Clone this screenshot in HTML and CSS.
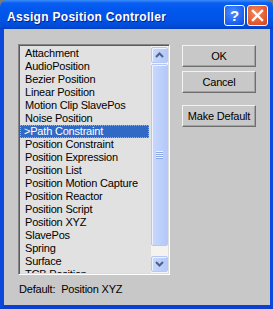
FILE: index.html
```html
<!DOCTYPE html>
<html>
<head>
    <title>Assign Position Controller</title>
    <link rel="stylesheet" href="styles.css">
</head>
<body>

<div class="window">
    <div class="titlebar">
        <div class="title">Assign Position Controller</div>
        <div class="caption-btn help">?</div>
        <div class="caption-btn close">
            <svg width="13" height="13" viewBox="0 0 13 13">
                <path d="M2 2 L11 11 M11 2 L2 11" stroke="#fff" stroke-width="2.4" stroke-linecap="square"/>
            </svg>
        </div>
    </div>

    <div class="client">
        <div class="left-col">
            <div class="listbox">
                <div class="items">
                    <div class="item">Attachment</div>
                    <div class="item">AudioPosition</div>
                    <div class="item">Bezier Position</div>
                    <div class="item">Linear Position</div>
                    <div class="item">Motion Clip SlavePos</div>
                    <div class="item">Noise Position</div>
                    <div class="item selected">&gt;Path Constraint</div>
                    <div class="item">Position Constraint</div>
                    <div class="item">Position Expression</div>
                    <div class="item">Position List</div>
                    <div class="item">Position Motion Capture</div>
                    <div class="item">Position Reactor</div>
                    <div class="item">Position Script</div>
                    <div class="item">Position XYZ</div>
                    <div class="item">SlavePos</div>
                    <div class="item">Spring</div>
                    <div class="item">Surface</div>
                    <div class="item">TCB Position</div>
                </div>
                <div class="scrollbar">
                    <div class="sb-btn">
                        <svg width="9" height="6" viewBox="0 0 9 6"><path d="M1 5 L4.5 1.5 L8 5" fill="none" stroke="#4d6185" stroke-width="2"/></svg>
                    </div>
                    <div class="sb-thumb">
                        <div class="grip"></div>
                    </div>
                    <div class="sb-track"></div>
                    <div class="sb-btn">
                        <svg width="9" height="6" viewBox="0 0 9 6"><path d="M1 1 L4.5 4.5 L8 1" fill="none" stroke="#4d6185" stroke-width="2"/></svg>
                    </div>
                </div>
            </div>
            <div class="default-line">
                <span class="default-label">Default:</span>
                <span>Position XYZ</span>
            </div>
        </div>

        <div class="buttons">
            <div class="btn">OK</div>
            <div class="btn">Cancel</div>
            <div class="btn spaced">Make Default</div>
        </div>
    </div>
</div>

</body>
</html>
```

FILE: styles.css
```css
body {
    margin: 0;
    background-color: #7a7a7a;
    font-family: 'Liberation Sans', Arial, sans-serif;
}
.window {
    width: 273px;
    height: 309px;
    display: flex;
    flex-direction: column;
}
.titlebar {
    height: 29px;
    box-sizing: border-box;
    padding: 2px 5px 0 7px;
    display: flex;
    align-items: center;
    border-radius: 7px 7px 0 0;
    background: linear-gradient(#3c8ef9 0px, #0a5ef2 3px, #0058ee 9px, #0054e6 20px, #0049d4 27px, #003fc0 29px);
}
.title {
    flex: 1;
    color: white;
    font-weight: bold;
    font-size: 12px;
    letter-spacing: 0.3px;
    padding-top: 2px;
    text-shadow: 1px 1px 0 #0a1e8c;
}
.caption-btn {
    width: 21px;
    height: 21px;
    box-sizing: border-box;
    border: 1px solid #ffffff;
    border-radius: 3px;
    display: flex;
    align-items: center;
    justify-content: center;
}
.help {
    margin-right: 2px;
    background: radial-gradient(circle at 40% 35%, #4d8ffb, #1a5ef0 70%, #0c49d6);
    color: white;
    font-weight: bold;
    font-size: 15px;
    line-height: 1;
}
.close {
    background: radial-gradient(circle at 40% 35%, #f08a5e, #e2552a 70%, #c9431b);
}
.client {
    flex: 1;
    display: flex;
    background-color: #c8c8c8;
    border-left: 4px solid #0b48dc;
    border-right: 3px solid #0b48dc;
    border-bottom: 4px solid #0b40d0;
}
.left-col {
    margin-left: 14px;
    padding-top: 15px;
}
.listbox {
    width: 152px;
    height: 231px;
    box-sizing: border-box;
    border: 1px solid;
    border-color: #858585 #ffffff #ffffff #858585;
    box-shadow: inset 1px 1px 0 #5a5a5a, inset -1px -1px 0 #dcdcdc;
    padding: 1px;
    background-color: #e1e1e1;
    display: flex;
}
.items {
    flex: 1;
    overflow: hidden;
    padding-top: 1px;
    font-size: 11px;
    letter-spacing: -0.2px;
}
.item {
    height: 13px;
    line-height: 13px;
    padding-left: 5px;
    white-space: nowrap;
    color: #000;
}
.item.selected {
    background-color: #316ac5;
    color: white;
    padding-left: 3px;
    margin-right: 2px;
    box-sizing: border-box;
    border: 1px dotted #f0a23a;
    line-height: 11px;
}
.scrollbar {
    width: 17px;
    box-sizing: border-box;
    padding: 1px 0;
    background-color: #f4f3ee;
    display: flex;
    flex-direction: column;
}
.sb-btn, .sb-thumb {
    box-sizing: border-box;
    border: 1px solid #b4c7f5;
    border-radius: 2px;
    box-shadow: inset 1px 1px 0 #eef3ff;
    background: linear-gradient(90deg, #c9d8fc, #bccefb 60%, #b4c8fa);
    display: flex;
    align-items: center;
    justify-content: center;
}
.sb-btn {
    height: 16px;
}
.sb-thumb {
    height: 182px;
    margin-top: 1px;
}
.sb-track {
    flex: 1;
}
.grip {
    width: 7px;
    height: 8px;
    background: repeating-linear-gradient(#eef3ff 0px, #eef3ff 1px, #8aa5e6 1px, #8aa5e6 2px);
}
.default-line {
    margin-top: 8px;
    margin-left: 1px;
    font-size: 11px;
    letter-spacing: -0.2px;
    line-height: 13px;
    color: #000;
}
.default-label {
    margin-right: 3px;
}
.buttons {
    margin-left: 12px;
    padding-top: 16px;
    display: flex;
    flex-direction: column;
    gap: 4px;
}
.btn {
    width: 74px;
    height: 22px;
    box-sizing: border-box;
    border: 1px solid;
    border-color: #f2f2f2 #6e6e6e #6e6e6e #f2f2f2;
    box-shadow: inset -1px -1px 0 #a2a2a2;
    font-size: 11px;
    letter-spacing: -0.2px;
    display: flex;
    align-items: center;
    justify-content: center;
    color: #000;
}
.btn.spaced {
    margin-top: 8px;
}
```
